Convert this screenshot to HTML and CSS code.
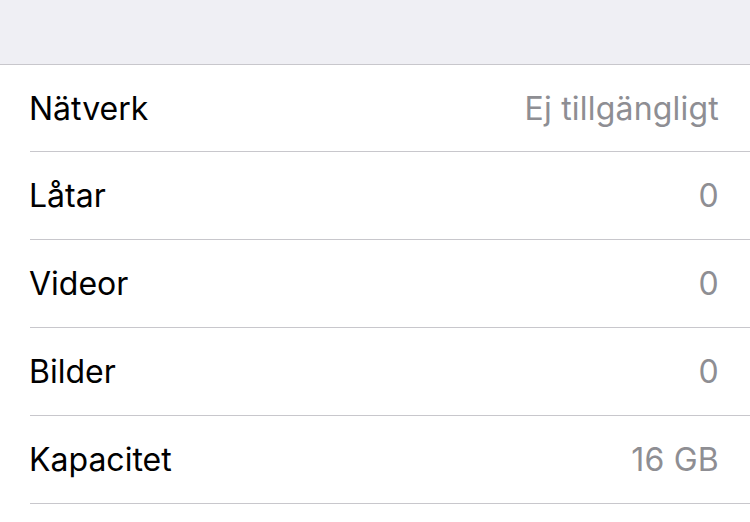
FILE: index.html
```html
<!DOCTYPE html>
<html lang="sv">
<head>
<meta charset="utf-8">
<link rel="stylesheet" href="styles.css">
</head>
<body>
<div class="header"></div>
<div class="list">
  <div class="row first"><span class="label">Nätverk</span><span class="value">Ej tillgängligt</span></div>
  <div class="row"><span class="label">Låtar</span><span class="value">0</span></div>
  <div class="row"><span class="label">Videor</span><span class="value">0</span></div>
  <div class="row"><span class="label">Bilder</span><span class="value">0</span></div>
  <div class="row"><span class="label">Kapacitet</span><span class="value">16 GB</span></div>
</div>
</body>
</html>
```
FILE: styles.css
```css
html, body {
  margin: 0;
  padding: 0;
  background: #ffffff;
  font-family: Inter, "Noto Sans", sans-serif;
}
.header {
  height: 64px;
  background: #efeff4;
  border-bottom: 1px solid #c8c7cc;
}
.list {
  background: #ffffff;
}
.row {
  margin-left: 30px;
  padding: 0 31px 0 0;
  height: 87px;
  border-bottom: 1px solid #c8c7cc;
  display: flex;
  align-items: center;
  justify-content: space-between;
  font-size: 32px;
}
.row.first {
  height: 86px;
}
.label {
  color: #000000;
  margin-left: -1px;
}
.value {
  color: #8e8e93;
  letter-spacing: 0.2px;
}
```
